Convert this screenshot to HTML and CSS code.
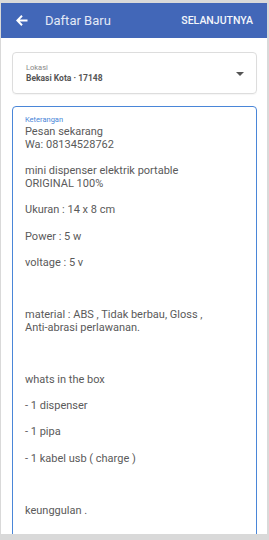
FILE: index.html
```html
<!DOCTYPE html>
<html lang="id">
<head>
    <meta charset="UTF-8">
    <meta name="viewport" content="width=device-width, initial-scale=1.0">
    <title>Daftar Baru</title>
    <link rel="stylesheet" href="styles.css">
</head>
<body>

<div class="app">
    <div class="topbar">
        <svg class="back" width="12" height="11" viewBox="0 0 12 11">
            <path d="M6 0.8 L1.3 5.5 L6 10.2 M1.5 5.5 H11.5" fill="none" stroke="#fff" stroke-width="2"/>
        </svg>
        <span class="title">Daftar Baru</span>
        <span class="next">SELANJUTNYA</span>
    </div>

    <div class="field select">
        <div class="field-body">
            <div class="label">Lokasi</div>
            <div class="value">Bekasi Kota · 17148</div>
        </div>
        <span class="caret"></span>
    </div>

    <div class="field focus">
        <div class="label blue">Keterangan</div>
        <div class="text">Pesan sekarang
Wa: 08134528762

mini dispenser elektrik portable
ORIGINAL 100%

Ukuran : 14 x 8 cm

Power : 5 w

voltage : 5 v



material : ABS , Tidak berbau, Gloss ,
Anti-abrasi perlawanan.



whats in the box

- 1 dispenser

- 1 pipa

- 1 kabel usb ( charge )



keunggulan .

</div>
    </div>
</div>

</body>
</html>
```

FILE: styles.css
```css
:root {
    --primary: #4267b8;
    --accent: #4a86d8;
    --text: #5a5a5a;
}
html, body {
    height: 100%;
}
body {
    margin: 0;
    padding: 3px 2px 0 1px;
    box-sizing: border-box;
    background: #d9d9d9;
    font-family: Roboto, 'Noto Sans', sans-serif;
    overflow: hidden;
}
.app {
    height: 531px;
    background: white;
    overflow: hidden;
}
.topbar {
    height: 35px;
    background: var(--primary);
    display: flex;
    align-items: center;
    padding: 0 14px 0 15px;
    color: white;
}
.back {
    display: block;
}
.title {
    margin-left: 17px;
    font-size: 13px;
    color: #e3e9f6;
    flex: 1;
}
.next {
    font-size: 10.5px;
    font-weight: 500;
    color: #f4f6fb;
}
.field {
    margin: 0 10px 0 11px;
    border: 1px solid #ddd;
    border-radius: 4px;
}
.select {
    margin-top: 14px;
    height: 42px;
    box-sizing: border-box;
    display: flex;
    align-items: center;
    padding: 0 12px 0 13px;
    box-shadow: 0 1px 1px rgba(0,0,0,0.04);
}
.field-body {
    flex: 1;
}
.label {
    font-size: 7.5px;
    line-height: 10px;
    color: #888;
}
.label.blue {
    color: var(--accent);
}
.value {
    font-size: 8.5px;
    line-height: 11px;
    font-weight: bold;
    color: #555;
}
.caret {
    width: 0;
    height: 0;
    border-left: 4.5px solid transparent;
    border-right: 4.5px solid transparent;
    border-top: 4.5px solid #555;
    margin-top: 1px;
}
.focus {
    margin-top: 12px;
    border: 1.5px solid var(--accent);
    padding: 8px 12px 0 12px;
    height: 600px;
}
.text {
    font-size: 11px;
    line-height: 13.07px;
    color: var(--text);
    white-space: pre-line;
}
```
